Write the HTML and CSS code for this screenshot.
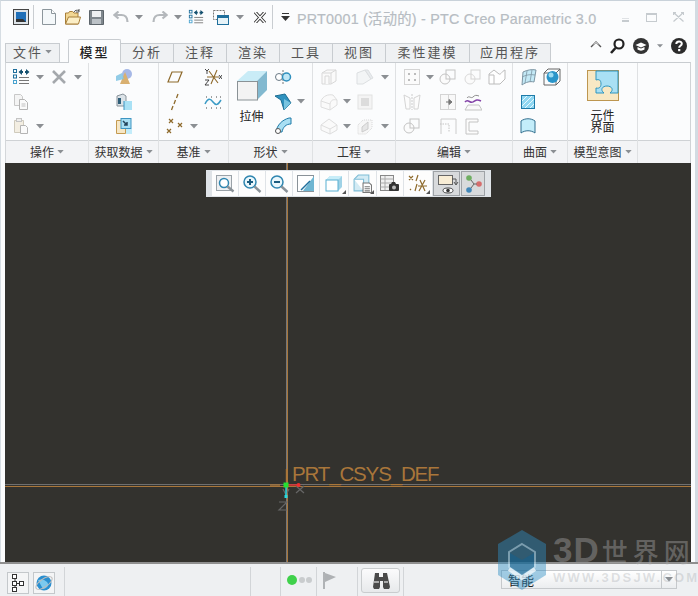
FILE: index.html
```html
<!DOCTYPE html>
<html lang="zh">
<head>
<meta charset="utf-8">
<title>PTC Creo Parametric 3.0</title>
<link rel="stylesheet" href="styles.css">
</head>
<body>
<svg class="defs" width="0" height="0">
  <defs>
    <symbol id="caret" viewBox="0 0 8 5"><path d="M0 0h8L4 4.500z" fill="#8b8f93"/></symbol>
    <symbol id="regen" viewBox="0 0 18 18"><g fill="none" stroke="#1f6f9c"><rect x="1.500" y="1.500" width="3" height="3"/><rect x="1.500" y="7" width="3" height="3"/><rect x="1.500" y="12.500" width="3" height="3" stroke="#4aa3cf"/></g><path d="M7 9.500h10M7 12.500h10M7 15.500h10" stroke="#777"/><path d="M6.500 4L10 1v2h1v2h-1v2zM17.500 4L14 1v2h-1v2h1v2z" fill="#14506f"/></symbol>
    <symbol id="bigx" viewBox="0 0 16 16"><path d="M2 2l12 12M14 2L2 14" stroke="#a4a8ac" stroke-width="2.600"/></symbol>
    <symbol id="copy" viewBox="0 0 18 18"><path d="M2.500 1.500h6l2 2v9h-8z" fill="#f4f4f4" stroke="#c8c8c8"/><path d="M7.500 6.500h5l3 3v7h-8z" fill="#fafafa" stroke="#b4b4b4"/><path d="M9.500 11h4M9.500 13h4" stroke="#c0c0c0"/></symbol>
    <symbol id="paste" viewBox="0 0 18 18"><path d="M2.500 3.500h9v12h-9z" fill="#f3eee2" stroke="#cfcabc"/><rect x="4.500" y="1.500" width="5" height="3" fill="#eee" stroke="#c4c4c4"/><path d="M8.500 8.500h5l2 2v6h-7z" fill="#fafafa" stroke="#b4b4b4"/></symbol>
    <symbol id="shared" viewBox="0 0 18 18"><circle cx="12" cy="6" r="5" fill="#a6b8e6"/><path d="M10 4l5 12H5z" fill="#d9b070"/><path d="M1 8l6-3 2 6-8 2z" fill="#7fc3e3" opacity=".85"/></symbol>
    <symbol id="copygeom" viewBox="0 0 18 18"><path d="M2 3l6-2 3 2v10H2z" fill="#dce3e8" stroke="#88929a"/><path d="M3 5h3v6H3z" fill="#2f5e78"/><rect x="9" y="8" width="8" height="9" fill="#a9e1f5"/><path d="M9 8v9" stroke="#3e95c2"/></symbol>
    <symbol id="shrink" viewBox="0 0 18 18"><path d="M1.500 3.500h9v13h-9z" fill="#f6e7c6" stroke="#c49a50"/><rect x="6" y="1.500" width="10" height="10" fill="#a9dff3" stroke="#3e95c2"/><path d="M8 4l4 4M12 5v3H9" stroke="#24445a" fill="none" stroke-width="1.500"/><rect x="11" y="12" width="6" height="5" fill="#c3ecfa"/></symbol>
    <symbol id="plane" viewBox="0 0 16 14"><path d="M5 2h10l-4 10H1z" fill="none" stroke="#8e6a2c" stroke-width="1.200"/></symbol>
    <symbol id="axis" viewBox="0 0 12 18"><path d="M9 1l-1.500 4M6.500 7L5 11M4 13l-1.500 4" stroke="#8e6a2c" stroke-width="1.300"/></symbol>
    <symbol id="points" viewBox="0 0 18 16"><path d="M3 1l4 4M7 1L3 5M12 5l4 4M16 5l-4 4M1 11l4 4M5 11l-4 4" stroke="#8e6a2c" stroke-width="1.200"/></symbol>
    <symbol id="csys" viewBox="0 0 18 18"><path d="M5 3l9 12M13 2L7 16M3 9h12" stroke="#8e6a2c" stroke-width="1.100" fill="none"/><path d="M1 1l2 2 2-2M3 3v3M1 12h4l-4 5h4M15 7l3 4M18 7l-3 4" stroke="#333" fill="none" stroke-width=".9"/></symbol>
    <symbol id="curve" viewBox="0 0 18 16"><path d="M1 10c3-6 5-6 8-2s5 3 8-2" fill="none" stroke="#3a9bc6" stroke-width="1.500"/><path d="M2 3h1M7 3h1M12 3h1M16 3h1M2 14h1M7 14h1M12 14h1M16 14h1" stroke="#444"/></symbol>
    <symbol id="extrude" viewBox="0 0 32 32"><path d="M1 11L12 1h19L21 11z" fill="#c9ecf7"/><path d="M21 11L31 1v19L21 30z" fill="#82b9d0"/><rect x="1.500" y="11.500" width="20" height="18.500" fill="#f3f3f3" stroke="#8a9296"/></symbol>
    <symbol id="revolve" viewBox="0 0 18 14"><path d="M9 0v14" stroke="#777" stroke-dasharray="2 1"/><circle cx="5" cy="7" r="3.500" fill="#fff" stroke="#6a7a86"/><circle cx="12.500" cy="7" r="4" fill="#bfe6f5" stroke="#2f8fbd" stroke-width="1.500"/></symbol>
    <symbol id="sweep" viewBox="0 0 18 18"><path d="M1 3l10-2 6 9-7 7-3-10z" fill="#2f92bf" stroke="#1d6d92"/><path d="M10 6l7 4-7 7z" fill="#79c4e0"/></symbol>
    <symbol id="sweep2" viewBox="0 0 18 18"><path d="M15 1h2v6c-5 0-8 3-9 8H2C3 8 8 3 15 1z" fill="#a9dff3" stroke="#1f7ba8"/><circle cx="4" cy="14" r="2.500" fill="#fff" stroke="#555"/></symbol>
    <symbol id="g-box" viewBox="0 0 18 18"><g fill="#fafafa" stroke="#d8d8d8"><path d="M2 5l5-3h9v11l-5 3H2z"/><path d="M2 5h9v11M11 5l5-3"/><path d="M5 16V8h4v8"/></g></symbol>
    <symbol id="g-round" viewBox="0 0 18 18"><path d="M1 8c2-5 7-7 12-6l4 5v5l-7 5-9-3z" fill="#fafafa" stroke="#dedede"/><path d="M1 8l9 3v6M10 11c1-4 3-5 7-4" fill="none" stroke="#dedede"/></symbol>
    <symbol id="g-cham" viewBox="0 0 18 18"><path d="M1 8l8-6 8 6v5l-7 4-9-4z" fill="#fafafa" stroke="#dedede"/><path d="M1 8l9 4v5M10 12l7-4" fill="none" stroke="#dedede"/></symbol>
    <symbol id="g-trim" viewBox="0 0 18 18"><path d="M1 5l8-3 6 9-8 5H1z" fill="#f3f5f6" stroke="#dcdfe1"/><path d="M9 2l6 9 2-1-5-8z" fill="#e8ebee" stroke="#dcdfe1"/></symbol>
    <symbol id="g-solid" viewBox="0 0 18 18"><rect x="2" y="2" width="14" height="14" fill="#f4f4f4" stroke="#e2e2e2"/><rect x="5" y="5" width="8" height="8" fill="#dcdcdc"/></symbol>
    <symbol id="g-thick" viewBox="0 0 18 18"><path d="M2 8l5-5h9v8l-6 6H2z" fill="#f7f7f7" stroke="#d6d6d6" stroke-dasharray="1 1"/><path d="M6 10l6-5v7l-6 3z" fill="#e6e6e6" stroke="#cccccc"/></symbol>
    <symbol id="g-pattern" viewBox="0 0 18 18"><rect x="1.500" y="1.500" width="15" height="15" fill="#fbfbfb" stroke="#d4d4d4"/><path d="M5 5h2v2H5zM11 5h2v2h-2zM5 11h2v2H5zM11 11h2v2h-2z" fill="#bcbcbc"/></symbol>
    <symbol id="g-merge" viewBox="0 0 18 18"><circle cx="6" cy="11" r="5" fill="#fbfbfb" stroke="#c4c4c4"/><rect x="7" y="2" width="9" height="9" fill="none" stroke="#c4c4c4"/></symbol>
    <symbol id="g-inter" viewBox="0 0 18 18"><circle cx="6" cy="11" r="5" fill="#fbfbfb" stroke="#dadada"/><rect x="7" y="2" width="9" height="9" fill="none" stroke="#d4d4d4"/></symbol>
    <symbol id="g-sketch" viewBox="0 0 18 18"><path d="M1 6l5-4 5 4c2 1 3-3 6-4v9l-5 5H1z" fill="#fff" stroke="#bcbcbc"/><path d="M6 16V7H1" fill="none" stroke="#bcbcbc"/></symbol>
    <symbol id="g-mirror" viewBox="0 0 18 18"><path d="M1 2l6 3v11H3zM17 2l-6 3v11h4z" fill="#fcfcfc" stroke="#d4d4d4"/><path d="M9 1v16" stroke="#cccccc" stroke-dasharray="2 1"/></symbol>
    <symbol id="g-extend" viewBox="0 0 18 18"><rect x="1.500" y="1.500" width="15" height="15" fill="#f8f8f8" stroke="#d4d4d4"/><path d="M9.500 1.500v15" stroke="#d4d4d4"/><path d="M7 9h5M10 6.500L13 9l-3 2.500z" fill="#777" stroke="#777"/></symbol>
    <symbol id="g-wrap" viewBox="0 0 18 18"><path d="M1 17l3-5h11l3 5z" fill="#fafafa" stroke="#c4c4c4"/><path d="M1 9c3-4 5 2 8 0s4-3 8-1" fill="none" stroke="#8443a8" stroke-width="1.500"/><path d="M3 5c2-3 4 1 6-1s3-2 6-1" fill="none" stroke="#8c8c8c"/></symbol>
    <symbol id="g-offset" viewBox="0 0 18 18"><path d="M1 17V2h15v15" fill="none" stroke="#cccccc" transform="matrix(-1 0 0 1 18 0)"/><path d="M1 7h9v8" fill="none" stroke="#c4c4c4" stroke-dasharray="1.500 1"/></symbol>
    <symbol id="g-thicken" viewBox="0 0 18 18"><path d="M2 2h12v3H5v9h9v3H2z" fill="#fcfcfc" stroke="#c4c4c4"/></symbol>
    <symbol id="s-quilt" viewBox="0 0 18 18"><path d="M4 4c4-2 9-3 13-2l-2 12c-4-1-8 0-12 3z" fill="#c3e9f6" stroke="#7d95a3"/><path d="M8 3L6 15M13 2l-2 12M3 9c4-2 8-3 13-2" fill="none" stroke="#7d95a3" stroke-width=".8"/></symbol>
    <symbol id="s-boundary" viewBox="0 0 18 18"><path d="M1 5l4-4h12v12l-4 4H1zM1 5h12v12M13 5l4-4" fill="none" stroke="#666"/><circle cx="9.500" cy="9" r="6" fill="#2b95c9"/><circle cx="8" cy="7" r="2.500" fill="#9ddcf2"/></symbol>
    <symbol id="s-fill" viewBox="0 0 14 14"><rect x=".5" y=".5" width="13" height="13" fill="#8fd7f2" stroke="#1e7ba9"/><path d="M1 6l5-5M1 11L11 1M4 13L13 4M9 13l4-4" stroke="#e8f8fd"/></symbol>
    <symbol id="s-blend" viewBox="0 0 16 16"><path d="M1 15V3c4-3 10-3 14 0v12c-4-3-10-3-14 0z" fill="#c3edfa" stroke="#336f8e"/></symbol>
    <symbol id="puzzle" viewBox="0 0 32 31"><rect x=".5" y=".5" width="31" height="30" fill="#f8e8c4" stroke="#bd9650"/><path d="M9 1h22v22h-8c4-3 2-7-3-7s-7 4-3 7H9v-5c4 1 5-2 5-4 0-4-2-5-5-4z" fill="#a9e0f4" stroke="#2e95bf"/></symbol>
    <symbol id="t-refit" viewBox="0 0 20 20"><rect x="1.500" y="1.500" width="15" height="15" fill="#eef0f2" stroke="#9aa2a8"/><circle cx="9" cy="9" r="4.500" fill="#fff" stroke="#2f86b0" stroke-width="1.500"/><path d="M12.500 12.500l6 5" stroke="#8a9298" stroke-width="2.400"/></symbol>
    <symbol id="t-in" viewBox="0 0 20 20"><circle cx="8" cy="8" r="6" fill="#eaf7fc" stroke="#2f86b0" stroke-width="1.500"/><path d="M5 8h6M8 5v6" stroke="#1c5d80" stroke-width="2"/><path d="M12.500 12.500l6 5.500" stroke="#8a9298" stroke-width="2.400"/></symbol>
    <symbol id="t-out" viewBox="0 0 20 20"><circle cx="8" cy="8" r="6" fill="#eaf7fc" stroke="#2f86b0" stroke-width="1.500"/><path d="M5 8h6" stroke="#1c5d80" stroke-width="2"/><path d="M12.500 12.500l6 5.500" stroke="#8a9298" stroke-width="2.400"/></symbol>
    <symbol id="t-repaint" viewBox="0 0 18 18"><rect x=".5" y=".5" width="16" height="16" fill="#f6f8f9" stroke="#8a9298"/><path d="M1 1h15v2L4 16H1z" fill="#fff"/><path d="M17 1v15H6z" fill="#6fb6d2"/><path d="M4 15l9-9" stroke="#1f6f9c" stroke-width="1.500"/></symbol>
    <symbol id="t-cube" viewBox="0 0 18 18"><path d="M1 5l4-4h12v11l-4 4H1z" fill="#9fd2e6"/><path d="M1 5l4-4h12l-4 4z" fill="#c8edf8"/><rect x="1" y="5" width="12" height="11" fill="#fff" stroke="#58afd2"/></symbol>
    <symbol id="t-cubedoc" viewBox="0 0 18 18"><path d="M1 5l4-4h10v8H9v7H1z" fill="#d3ebf4" stroke="#7fbdd6"/><path d="M1 5h9v11" fill="#fff" stroke="#7fbdd6"/><path d="M9.500 8.500h6l2 2v7h-8z" fill="#fff" stroke="#777"/><path d="M11 12h5M11 14h5M11 16h5" stroke="#777"/></symbol>
    <symbol id="t-saved" viewBox="0 0 20 20"><rect x=".5" y="1.500" width="13" height="15" fill="#f0f0f0" stroke="#888"/><path d="M.5 5h13M.5 9h13M.5 13h13M5 2v14" stroke="#aaa"/><rect x="9" y="10" width="10" height="7" rx="1" fill="#333"/><path d="M11 10l1-2h3l1 2" fill="#333"/><circle cx="14" cy="13.500" r="2" fill="#bbb"/></symbol>
    <symbol id="t-datum" viewBox="0 0 20 20"><path d="M1 2l4 4M5 2L1 6M10 1L8 7M9 10l-2 7M2 16l1-1M12 6l5 11M17 6l-6 11M10 12h9" stroke="#8e6a2c" stroke-width="1.200" fill="none"/></symbol>
    <symbol id="t-spin" viewBox="0 0 24 22"><rect x="3.500" y="2.500" width="14" height="9" fill="#f8edd5" stroke="#666"/><path d="M17 6h4v5M19 9l2 3 2-3" fill="none" stroke="#555"/><ellipse cx="13" cy="17.500" rx="5" ry="2.500" fill="#fff" stroke="#444"/><circle cx="13" cy="17.500" r="1.800" fill="#333"/></symbol>
    <symbol id="t-node" viewBox="0 0 20 20"><circle cx="6" cy="4" r="2.800" fill="#6eae62"/><circle cx="6" cy="16" r="2.800" fill="#4287b8"/><circle cx="16" cy="10" r="2.800" fill="#d66d6d"/><path d="M8 6l3 4h3M8 14l3-4" stroke="#666" fill="none"/></symbol>
  </defs>
</svg>

<div class="window">
  <header class="titlebar">
    <svg class="qa app" width="16" height="16" viewBox="0 0 16 16"><rect x=".5" y=".5" width="15" height="15" fill="#dde3e8" stroke="#444"/><rect x="3" y="3" width="10" height="10" fill="#1f6fb8"/><path d="M3 13h10l-3-3H3z" fill="#333"/></svg>
    <span class="vsep"></span>
    <svg class="qa new" width="14" height="16" viewBox="0 0 14 16"><path d="M.5.500h9l4 4v11H.5z" fill="#f4f8fa" stroke="#8c969c"/><path d="M9.500.500v4h4" fill="#fff" stroke="#8c969c"/></svg>
    <svg class="qa open" width="16" height="16" viewBox="0 0 16 16"><path d="M.5 15V4h3l1-1.500h3L9 4h4v11z" fill="#f2d794" stroke="#a77f3b"/><path d="M.5 15l3-7h12l-2 7z" fill="#fbeec6" stroke="#a77f3b"/><path d="M9 3c1-2 3-2 5-1.500M14 0v3h-3" fill="none" stroke="#555"/></svg>
    <svg class="qa save" width="15" height="15" viewBox="0 0 15 15"><path d="M.5.500h14v14H.5z" fill="#7f878d" stroke="#5d656b"/><rect x="3" y="1" width="9" height="6" fill="#eef0f2"/><rect x="3" y="9" width="9" height="5" fill="#bcc2c7"/></svg>
    <svg class="qa undo" width="16" height="12" viewBox="0 0 16 12"><path d="M14.500 11c0-5-3-7-6-7H2M5.500.5L1.500 4l4 3.500" fill="none" stroke="#b4b8bc" stroke-width="2.200"/></svg>
    <svg class="qa tiny k1" width="8" height="5"><use href="#caret"/></svg>
    <svg class="qa redo" width="16" height="12" viewBox="0 0 16 12"><path d="M1.500 11c0-5 3-7 6-7H14M10.500.5l4 3.500-4 3.500" fill="none" stroke="#b4b8bc" stroke-width="2.200"/></svg>
    <svg class="qa tiny k2" width="8" height="5"><use href="#caret"/></svg>
    <svg class="qa regen" width="16" height="16"><use href="#regen"/></svg>
    <svg class="qa wins" width="16" height="15" viewBox="0 0 16 15"><rect x=".5" y=".5" width="11" height="9" fill="none" stroke="#777" stroke-dasharray="2 1"/><rect x="4.500" y="5.500" width="11" height="9" fill="#e6f3f8" stroke="#1f6f9c"/><path d="M5 6h10v2H5z" fill="#1f6f9c"/></svg>
    <svg class="qa tiny k3" width="8" height="5"><use href="#caret"/></svg>
    <svg class="qa close" width="12" height="11" viewBox="0 0 12 11"><path d="M1 0l10 11M11 0L1 11" stroke="#333" stroke-width="3.200"/><path d="M1 0l10 11M11 0L1 11" stroke="#fff" stroke-width="1.400"/></svg>
    <span class="vsep vsep2"></span>
    <svg class="qa custom" width="9" height="8" viewBox="0 0 9 8"><path d="M1 .5h7" stroke="#333"/><path d="M0 3h9L4.500 8z" fill="#333"/></svg>
    <h1 class="title">PRT0001 (活动的) - PTC Creo Parametric 3.0</h1>
    <div class="winctl">
      <span class="wmin"></span>
      <span class="wmax"></span>
      <svg width="11" height="10" viewBox="0 0 11 10"><path d="M.5.500l10 9M10.500.5l-10 9M3 .5H.5V3M8 .5h2.500V3" fill="none" stroke="#c6cbcf" stroke-width="1.300"/></svg>
    </div>
  </header>

  <nav class="tabbar">
    <div class="tab file">文件<svg width="7" height="4"><use href="#caret"/></svg></div>
    <div class="tab active">模型</div>
    <div class="tab">分析</div>
    <div class="tab">注释</div>
    <div class="tab">渲染</div>
    <div class="tab">工具</div>
    <div class="tab">视图</div>
    <div class="tab wide">柔性建模</div>
    <div class="tab wide">应用程序</div>
    <div class="helpers">
      <svg class="chev" width="12" height="8" viewBox="0 0 12 8"><path d="M1 7l5-5 5 5" fill="none" stroke="#555" stroke-width="1.400"/><path d="M3.500 4.500L6 2l2.500 2.500" fill="none" stroke="#bbb"/></svg>
      <svg width="15" height="16" viewBox="0 0 15 16"><circle cx="9" cy="6" r="4.500" fill="#fff" stroke="#222" stroke-width="2.200"/><path d="M5.500 10L1 15" stroke="#222" stroke-width="2.600"/></svg>
      <svg width="16" height="16" viewBox="0 0 16 16"><circle cx="8" cy="8" r="8" fill="#333"/><path d="M2.500 7L8 4.500 13.500 7 8 9.500z" fill="#fff"/><path d="M4.500 9v2.500c2 1.500 5 1.500 7 0V9L8 10.500z" fill="#fff"/></svg>
      <svg width="6" height="4"><use href="#caret"/></svg>
      <svg width="16" height="16" viewBox="0 0 16 16"><circle cx="8" cy="8" r="8" fill="#2b2b2b"/><path d="M5.300 6c0-3.300 5.500-3.300 5.500-.2 0 2-2.600 2-2.600 3.900" fill="none" stroke="#fff" stroke-width="2"/><rect x="7.100" y="11" width="2.200" height="2.200" fill="#fff"/></svg>
    </div>
  </nav>

  <section class="ribbon">
    <div class="group g1">
      <div class="cells">
        <span><svg width="18" height="18"><use href="#regen"/></svg></span><span class="k"><svg width="8" height="5"><use href="#caret"/></svg></span><span><svg width="16" height="16"><use href="#bigx"/></svg></span><span class="k"><svg width="8" height="5"><use href="#caret"/></svg></span>
        <span><svg width="18" height="18"><use href="#copy"/></svg></span><span></span><span></span><span></span>
        <span><svg width="18" height="18"><use href="#paste"/></svg></span><span class="k"><svg width="8" height="5"><use href="#caret"/></svg></span><span></span><span></span>
      </div>
      <div class="glabel">操作<svg width="7" height="4"><use href="#caret"/></svg></div>
    </div>
    <div class="group g2">
      <div class="cells">
        <span><svg width="18" height="18"><use href="#shared"/></svg></span>
        <span><svg width="18" height="18"><use href="#copygeom"/></svg></span>
        <span><svg width="18" height="18"><use href="#shrink"/></svg></span>
      </div>
      <div class="glabel">获取数据<svg width="7" height="4"><use href="#caret"/></svg></div>
    </div>
    <div class="group g3">
      <div class="cells">
        <span><svg width="16" height="14"><use href="#plane"/></svg></span><span></span><span><svg width="18" height="18"><use href="#csys"/></svg></span>
        <span><svg width="12" height="18"><use href="#axis"/></svg></span><span></span><span><svg width="18" height="16"><use href="#curve"/></svg></span>
        <span><svg width="18" height="16"><use href="#points"/></svg></span><span class="k"><svg width="8" height="5"><use href="#caret"/></svg></span><span></span>
      </div>
      <div class="glabel">基准<svg width="7" height="4"><use href="#caret"/></svg></div>
    </div>
    <div class="group g4">
      <div class="cells">
        <div class="big"><svg width="32" height="32"><use href="#extrude"/></svg><b>拉伸</b></div>
        <span><svg width="18" height="14"><use href="#revolve"/></svg></span><span></span>
        <span><svg width="18" height="18"><use href="#sweep"/></svg></span><span class="k"><svg width="8" height="5"><use href="#caret"/></svg></span>
        <span><svg width="18" height="18"><use href="#sweep2"/></svg></span><span></span>
      </div>
      <div class="glabel">形状<svg width="7" height="4"><use href="#caret"/></svg></div>
    </div>
    <div class="group g5">
      <div class="cells">
        <span><svg width="18" height="18"><use href="#g-box"/></svg></span><span></span><span><svg width="18" height="18"><use href="#g-trim"/></svg></span><span class="k"><svg width="8" height="5"><use href="#caret"/></svg></span>
        <span><svg width="18" height="18"><use href="#g-round"/></svg></span><span class="k"><svg width="8" height="5"><use href="#caret"/></svg></span><span><svg width="18" height="18"><use href="#g-solid"/></svg></span><span></span>
        <span><svg width="18" height="18"><use href="#g-cham"/></svg></span><span class="k"><svg width="8" height="5"><use href="#caret"/></svg></span><span><svg width="18" height="18"><use href="#g-thick"/></svg></span><span class="k"><svg width="8" height="5"><use href="#caret"/></svg></span>
      </div>
      <div class="glabel">工程<svg width="7" height="4"><use href="#caret"/></svg></div>
    </div>
    <div class="group g6">
      <div class="cells">
        <span><svg width="18" height="18"><use href="#g-pattern"/></svg></span><span class="k"><svg width="8" height="5"><use href="#caret"/></svg></span><span><svg width="18" height="18"><use href="#g-merge"/></svg></span><span><svg width="18" height="18"><use href="#g-inter"/></svg></span><span><svg width="18" height="18"><use href="#g-sketch"/></svg></span>
        <span><svg width="18" height="18"><use href="#g-mirror"/></svg></span><span></span><span><svg width="18" height="18"><use href="#g-extend"/></svg></span><span><svg width="18" height="18"><use href="#g-wrap"/></svg></span><span></span>
        <span><svg width="18" height="18"><use href="#g-merge"/></svg></span><span></span><span><svg width="18" height="18"><use href="#g-offset"/></svg></span><span><svg width="18" height="18"><use href="#g-thicken"/></svg></span><span></span>
      </div>
      <div class="glabel">编辑<svg width="7" height="4"><use href="#caret"/></svg></div>
    </div>
    <div class="group g7">
      <div class="cells">
        <span><svg width="18" height="18"><use href="#s-quilt"/></svg></span><span><svg width="18" height="18"><use href="#s-boundary"/></svg></span>
        <span><svg width="14" height="14"><use href="#s-fill"/></svg></span><span></span>
        <span><svg width="16" height="16"><use href="#s-blend"/></svg></span><span></span>
      </div>
      <div class="glabel">曲面<svg width="7" height="4"><use href="#caret"/></svg></div>
    </div>
    <div class="group g8">
      <div class="cells">
        <div class="big"><svg width="32" height="31"><use href="#puzzle"/></svg><b>元件<br>界面</b></div>
      </div>
      <div class="glabel">模型意图<svg width="7" height="4"><use href="#caret"/></svg></div>
    </div>
    <div class="group g9">
      <div class="cells"></div>
      <div class="glabel"></div>
    </div>
  </section>

  <main class="canvas">
    <i class="line v-gray"></i><i class="line v-orange"></i>
    <i class="line h-gray"></i><i class="line h-orange"></i>
    <div class="viewbar">
      <span class="vb"><svg width="20" height="20"><use href="#t-refit"/></svg></span>
      <span class="vb"><svg width="20" height="20"><use href="#t-in"/></svg></span>
      <span class="vb"><svg width="20" height="20"><use href="#t-out"/></svg></span>
      <span class="vb"><svg width="18" height="18"><use href="#t-repaint"/></svg></span>
      <span class="vb more w29"><svg width="18" height="18"><use href="#t-cube"/></svg></span>
      <span class="vb more w28"><svg width="19" height="19"><use href="#t-cubedoc"/></svg></span>
      <span class="vb"><svg width="20" height="20"><use href="#t-saved"/></svg></span>
      <span class="vb more w29"><svg width="20" height="20"><use href="#t-datum"/></svg></span>
      <span class="vb on w28"><svg width="24" height="22"><use href="#t-spin"/></svg></span>
      <span class="vb on w25"><svg width="20" height="20"><use href="#t-node"/></svg></span>
    </div>
    <span class="csys-label">PRT_CSYS_DEF</span>
    <svg class="triad" width="40" height="40" viewBox="0 0 40 40">
      <path d="M21 2l8 7M29 2l-8 7M8 5l3 6 3-6M4 18h8l-8 8h8" fill="none" stroke="#666" stroke-width="1.200"/>
      <path d="M-5 1h10" stroke="#a9763a" stroke-width="1.400"/>
      <path d="M11.500 -15v13" stroke="#a9763a" stroke-width="1.400"/>
      <path d="M12 1h12" stroke="#ee3030" stroke-width="1.400"/>
      <path d="M11 1v11" stroke="#26d9e0" stroke-width="1.400"/>
      <rect x="8.500" y="-1.500" width="5" height="5" fill="#25e030"/>
      <circle cx="23.500" cy="1" r="2" fill="#ee3030"/>
      <rect x="9.500" y="11" width="3" height="3" fill="#26d9e0"/>
    </svg>
  </main>

  <footer class="statusbar">
    <span class="sbtn"><svg width="14" height="18" viewBox="0 0 14 18"><path d="M4 3v14M4 9.500h6" stroke="#333"/><g fill="#fff" stroke="#333"><rect x="1.500" y=".5" width="4" height="4"/><rect x="1.500" y="7.500" width="4" height="4"/><rect x="1.500" y="13.500" width="4" height="4"/><rect x="8.500" y="7.500" width="4" height="4"/></g></svg></span>
    <span class="sbtn"><svg width="18" height="18" viewBox="0 0 18 18"><circle cx="9" cy="9" r="7.500" fill="#2a8fd0"/><path d="M3 6c3-1 6-1 9 2s-1 7-4 7" fill="#7cc9ee"/><ellipse cx="9" cy="9" rx="9.500" ry="4" fill="none" stroke="#bbb" transform="rotate(-35 9 9)"/></svg></span>
    <i class="ssep s1"></i><i class="ssep s2"></i><i class="ssep s3"></i>
    <span class="dot green"></span><span class="dot gray"></span><span class="dot gray"></span>
    <i class="ssep s4"></i>
    <svg class="flag" width="13" height="17" viewBox="0 0 13 17"><path d="M1 0v17" stroke="#b0b3b6" stroke-width="2"/><path d="M2 1l11 4-11 5z" fill="#aeb1b4"/></svg>
    <i class="ssep s5"></i>
    <span class="find"><svg width="18" height="17" viewBox="0 0 18 17"><path d="M3 1h4v4h4V1h4l3 14-1 2h-5l-1-2V9H8v6l-1 2H2l-1-2z" fill="#4a4a4a"/><path d="M2 10h5M12 10h4" stroke="#aaa" stroke-width="2"/></svg></span>
    <i class="ssep s6"></i>
    <div class="combo"><span>智能</span><i><svg width="8" height="5"><use href="#caret"/></svg></i></div>
  </footer>

  <div class="watermark">
    <svg width="50" height="62" viewBox="0 0 50 62"><path d="M25 1l24 14v31L25 61 1 46V15z" fill="#2f8fc4" opacity=".45"/><path d="M12 40l13 9 13-9" fill="none" stroke="#fff" stroke-width="4" opacity=".7"/><path d="M25 15l13 8v15l-13 8-13-8V23z" fill="none" stroke="#d8eef8" stroke-width="2" opacity=".45"/><path d="M25 31l12-7v14l-12 8zM25 31l-12-7v14l12 8z" fill="#17618c" opacity=".6"/></svg>
    <div class="wm-text"><b><em>3D</em>世界网</b><small>WWW.3DSJW.COM</small></div>
  </div>
</div>
</body>
</html>
```
FILE: styles.css
```css
* { box-sizing: border-box; }
html, body { margin: 0; height: 100%; overflow: hidden; background: #fafbfc; }
body { font-family: "Noto Sans CJK SC", "Liberation Sans", sans-serif; color: #333; }
.defs { position: absolute; }
svg { display: block; flex: none; }

.window { position: relative; width: 698px; height: 596px; display: flex; flex-direction: column; border-top: 1px solid #c9d2da; border-right: 3px solid #d3dbe2; border-left: 1px solid #d6dde3; background: #fbfcfd; }

.titlebar { height: 38px; display: flex; align-items: center; padding: 0 0 6px 12px; }
.vsep { width: 1px; height: 24px; background: #c9cdd1; margin: 0 8px 0 4px; }
.new { margin-right: 9px; }
.open { margin-right: 8px; }
.save { margin-right: 9px; }
.undo { margin-right: 6px; }
.k1 { margin-right: 9px; }
.redo { margin-right: 6px; }
.k2 { margin-right: 6px; }
.regen { margin-right: 9px; }
.wins { margin-right: 7px; }
.k3 { margin-right: 10px; }
.close { margin-right: 6px; }
.vsep2 { margin: 0 8px 0 0; }
.custom { margin-right: 7px; }
.title { margin: 0; font: 400 14.300px "Liberation Sans", "Noto Sans CJK SC", sans-serif; letter-spacing: .25px; color: #b7bdc3; white-space: nowrap; -webkit-text-stroke: .2px #b7bdc3; }
.winctl { margin-left: auto; display: flex; align-items: center; gap: 16px; padding-right: 11px; }
.wmin { width: 7px; height: 4px; border-bottom: 2px solid #c6cbcf; border-top: 1px solid #dfe2e5; margin-top: 5px; margin-right: 1px; }
.wmax { width: 11px; height: 9px; border: 1px solid #c6cbcf; border-top-width: 2px; }

.tabbar { height: 23px; display: flex; align-items: flex-end; padding-left: 4px; position: relative; z-index: 1; }
.tab { height: 19px; width: 53px; border: 1px solid #c8ccd0; border-left: 0; border-bottom: 0; background: #eff1f3; font-size: 13px; line-height: 15px; letter-spacing: 2px; text-align: center; color: #555; }
.tab.file { width: 55px; border-left: 1px solid #c8ccd0; margin-right: 8px; display: flex; align-items: center; justify-content: center; gap: 2px; padding-bottom: 3px; color: #555; }
.tab.active { width: 53px; height: 24px; margin-bottom: -1px; background: #fbfcfd; border-left: 1px solid #c8ccd0; color: #222; font-weight: 500; line-height: 24px; border-radius: 2px 2px 0 0; }
.tab.wide { width: 84px; }
.tab.wide + .tab.wide { width: 81px; }
.helpers { margin-left: auto; display: flex; align-items: center; gap: 8px; padding-right: 8px; align-self: flex-start; margin-top: -1px; }
.chev { margin-top: -4px; }

.ribbon { display: flex; height: 101px; margin-left: 4px; border-top: 1px solid #c8ccd0; border-left: 1px solid #d4d7da; border-right: 1px solid #d0d3d6; width: 686px; }
.group { display: flex; flex-direction: column; border-right: 1px solid #dfe1e3; }
.cells { height: 77px; padding-top: 2px; display: grid; grid-auto-rows: 24.500px; }
.cells > span { display: flex; align-items: center; justify-content: center; }
.glabel { height: 23px; border-top: 1px solid #cfd2d5; background: #f3f4f6; font-size: 12px; line-height: 20px; display: flex; align-items: center; justify-content: center; gap: 3px; color: #333; }
.g1 { width: 83px; } .g1 .cells { padding-left: 5px; grid-template-columns: repeat(4, 19px); }
.g2 { width: 70px; } .g2 .cells { grid-template-columns: 1fr; }
.g3 { width: 70px; } .g3 .cells { padding-left: 6px; grid-template-columns: repeat(3, 19px); }
.g4 { width: 84px; } .g4 .cells { grid-template-columns: 45px 18px 18px; }
.g5 { width: 83px; } .g5 .cells { padding-left: 7px; grid-template-columns: 18px 18px 18px 21px; }
.g6 { width: 117px; } .g6 .cells { padding-left: 7px; grid-template-columns: 18px 18px 18px 32px 16px; }
.g7 { width: 55px; } .g7 .cells { padding-left: 3px; grid-template-columns: 24px 24px; }
.g8 { width: 70px; } .g8 .cells { grid-template-columns: 1fr; }
.g9 { flex: 1; border-right: 0; }
.big { grid-row: span 3; display: flex; flex-direction: column; align-items: center; padding-top: 5px; }
.big b { font-weight: 400; font-size: 12px; line-height: 12px; margin-top: 8px; text-align: center; color: #222; }

.canvas { position: relative; height: 399px; margin-left: 4px; width: 686px; background: #33322e; overflow: hidden; }
.line { position: absolute; display: block; }
.v-gray { left: 281px; top: 0; bottom: 0; width: 1px; background: #777; }
.v-orange { left: 282px; top: 0; bottom: 0; width: 1px; background: #a9763a; }
.h-gray { left: 0; right: 0; top: 321px; height: 1px; background: #6f6f6f; }
.h-orange { left: 0; right: 0; top: 323px; height: 1px; background: #a9763a; }
.viewbar { position: absolute; left: 201px; top: 7px; height: 27px; display: flex; padding: 1px 6px; background: #dfe3e7; gap: 1px; }
.vb { width: 26px; display: flex; align-items: center; justify-content: center; background: #fdfdfd; position: relative; }
.vb.w29 { width: 28px; } .vb.w28 { width: 27px; } .vb.w25 { width: 24px; }
.vb.more::after { content: ""; position: absolute; right: 2px; bottom: 2px; border: 2px solid transparent; border-right-color: #555; border-bottom-color: #555; }
.vb.on { background: #d8dadc; box-shadow: inset 0 0 0 1px #9ea2a6; }
.csys-label { position: absolute; left: 287px; top: 298px; font: 400 20.500px "Liberation Sans", sans-serif; letter-spacing: -1.150px; color: #a9763a; white-space: nowrap; line-height: 26px; }
.triad { position: absolute; left: 270px; top: 321px; overflow: visible; }

.statusbar { position: relative; flex: 1; margin: 0 -3px 0 -1px; background: #eef0f2; border-top: 2px solid #8f8f8f; display: flex; align-items: center; padding: 0 0 0 7px; }
.sbtn { width: 22px; height: 22px; margin-top: 6px; margin-right: 4px; border: 1px solid #c4c8cb; background: #f4f5f6; display: flex; align-items: center; justify-content: center; }
.ssep { position: absolute; top: 3px; height: 29px; width: 1px; background: #d2d5d8; }
.s1 { left: 64px; } .s2 { left: 250px; } .s3 { left: 280px; } .s4 { left: 316px; } .s5 { left: 357px; } .s6 { left: 403px; }
.dot { position: absolute; border-radius: 50%; }
.dot.green { left: 287px; top: 11px; width: 10px; height: 10px; background: #3fd14b; }
.dot.gray { top: 13px; width: 6px; height: 6px; background: #c9ccce; left: 299px; }
.dot.gray + .dot.gray { left: 306px; }
.flag { position: absolute; left: 323px; top: 8px; }
.find { position: absolute; left: 361px; top: 4px; width: 39px; height: 25px; border: 1px solid #c9ccce; border-radius: 3px; background: linear-gradient(#fbfbfc, #e7e9eb); display: flex; align-items: center; justify-content: center; }
.combo { position: absolute; left: 501px; top: 6px; width: 176px; height: 19px; border: 1px solid #c6c9cc; background: linear-gradient(#fff, #ebedef); display: flex; align-items: center; justify-content: space-between; padding-left: 6px; font-size: 13px; line-height: 15px; color: #222; }
.combo i { width: 15px; height: 17px; border-left: 1px solid #c6c9cc; display: flex; align-items: center; justify-content: center; }

.watermark { position: absolute; left: 496px; top: 528px; display: flex; gap: 6px; pointer-events: none; }
.wm-text { display: flex; flex-direction: column; }
.wm-text b { font: 500 26px/36px "Noto Sans CJK SC", sans-serif; letter-spacing: 5px; margin-right: -5px; color: rgba(170, 170, 170, .42); white-space: nowrap; margin-top: 3px; }
.wm-text em { font: 700 35px/36px "Liberation Sans", sans-serif; letter-spacing: 1px; margin-right: 2px; }
.wm-text small { font: 700 13px/14px "Liberation Sans", sans-serif; letter-spacing: 2.200px; color: rgba(150, 155, 160, .28); margin-top: 2px; white-space: nowrap; }
```
